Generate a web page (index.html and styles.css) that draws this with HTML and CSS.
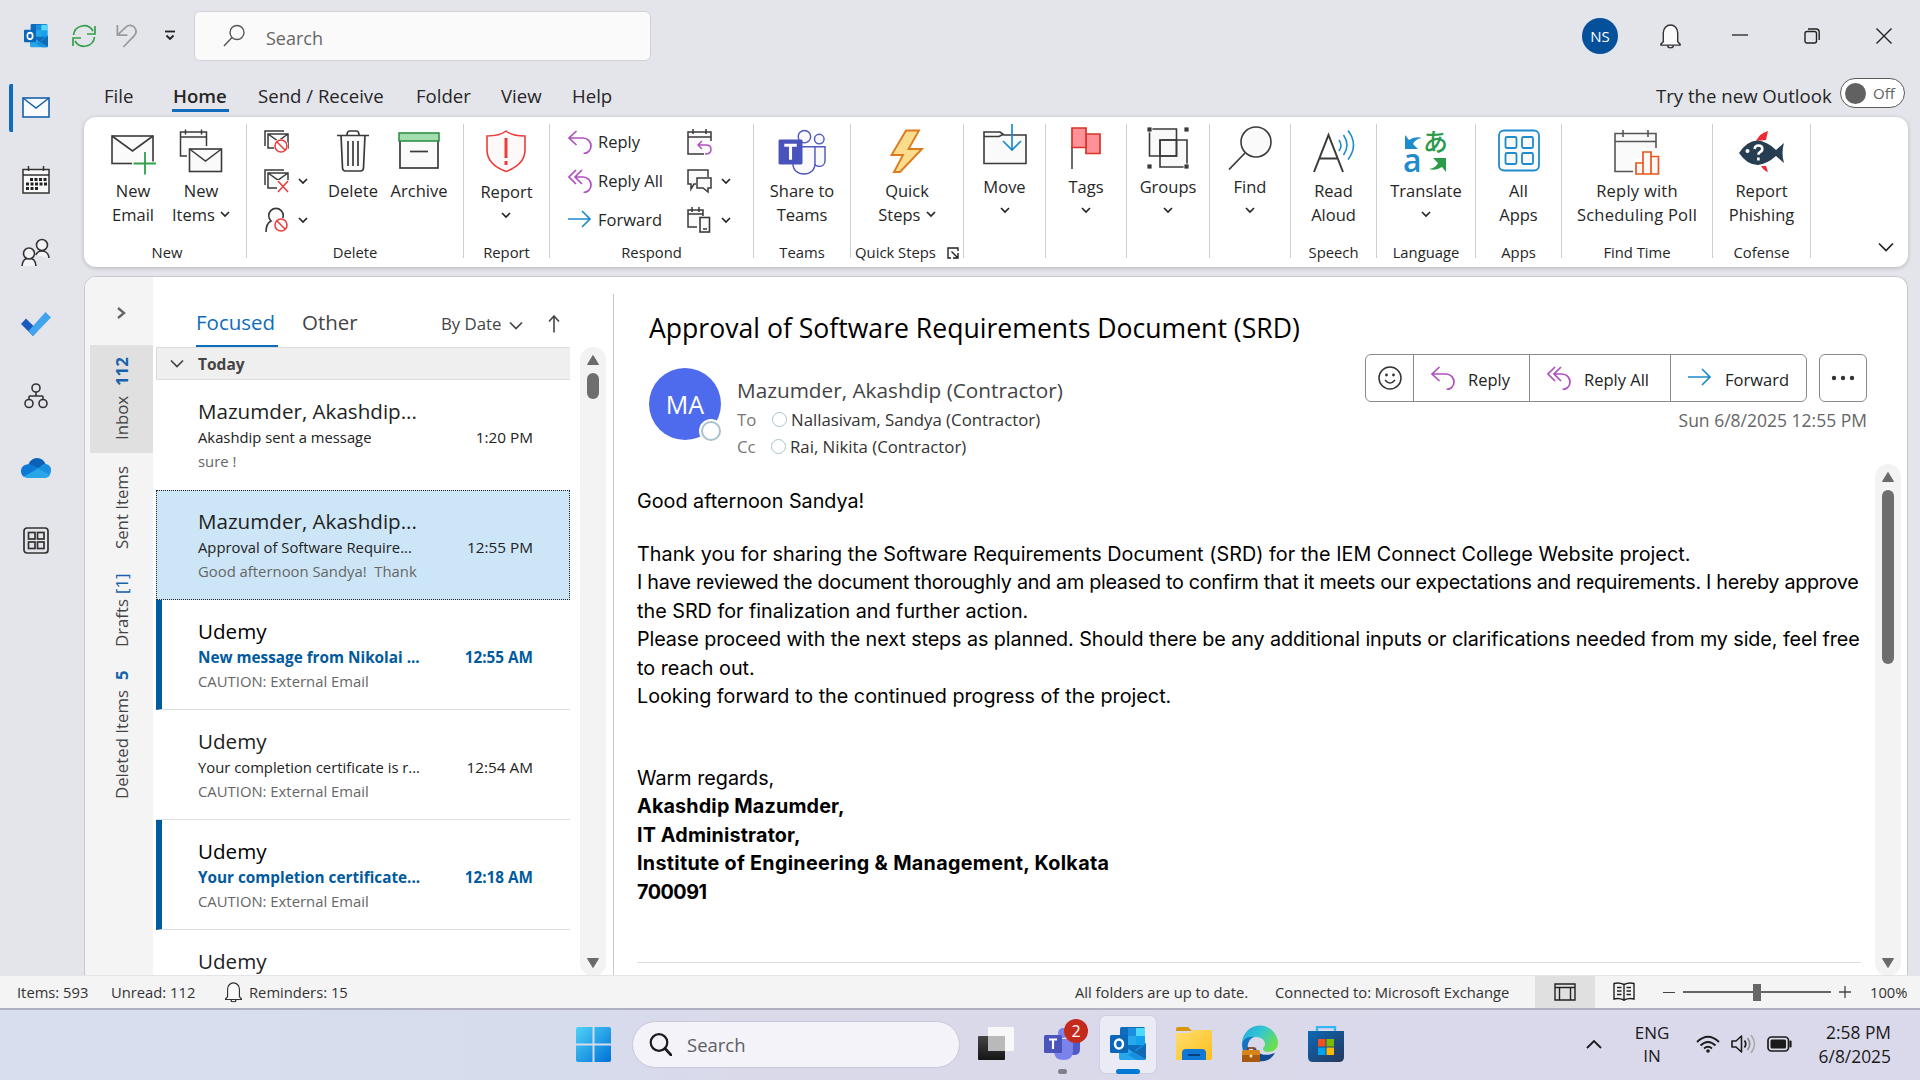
FILE: index.html
```html
<!DOCTYPE html>
<html lang="en">
<head>
<meta charset="utf-8">
<title>Inbox - Outlook</title>
<link rel="stylesheet" href="styles.css">
</head>
<body>
<svg class="defs" width="0" height="0">
  <defs>
    <symbol id="i-chev" viewBox="0 0 10 10"><path d="M1 3l4 4 4-4" fill="none" stroke="#262626" stroke-width="1.7"/></symbol>
    <symbol id="i-reply" viewBox="0 0 24 24"><path d="M8.500 1L1 8l7.500 7M1 8h14c4.500 0 8 3.500 8 8s-3.500 7.500-7.500 7.500" fill="none" stroke="#b14fc0" stroke-width="1.700"/></symbol>
    <symbol id="i-replyall" viewBox="0 0 24 24"><path d="M8 1L1 8l7 7M14 1L7 8l7 7M7 8h8c4.500 0 8 3.500 8 8s-3.500 7.500-7.500 7.500" fill="none" stroke="#b14fc0" stroke-width="1.700"/></symbol>
    <symbol id="i-forward" viewBox="0 0 24 24"><path d="M0 11h22M14 3l8 8-8 8" fill="none" stroke="#1e8bcd" stroke-width="1.700"/></symbol>
    <symbol id="i-no" viewBox="0 0 14 14"><circle cx="7" cy="7" r="6" fill="#fff" stroke="#fff" stroke-width="3"/><circle cx="7" cy="7" r="6" fill="#fff" stroke="#ec3d3d" stroke-width="1.600"/><path d="M3 3l8 8" stroke="#ec3d3d" stroke-width="1.600"/></symbol>
    <symbol id="i-up" viewBox="0 0 14 12"><path d="M7 1.500L12.500 10.500H1.500z" fill="#6a6a6a" stroke="#6a6a6a" stroke-linejoin="round"/></symbol>
    <symbol id="i-down" viewBox="0 0 14 12"><path d="M7 10.500L12.500 1.500H1.500z" fill="#6a6a6a" stroke="#6a6a6a" stroke-linejoin="round"/></symbol>
    <symbol id="i-bell" viewBox="0 0 24 26"><path d="M4.500 19V9.500a7.500 8 0 0 1 15 0V19l2.500 2.500v1H2v-1z" fill="#fafafa" stroke="#333" stroke-width="1.500"/><path d="M9 23a3 2.500 0 0 0 6 0" fill="none" stroke="#333" stroke-width="1.500"/></symbol>
    <symbol id="i-outlook" viewBox="0 0 36 34"><rect x="10" y="0" width="25" height="26" rx="1.500" fill="#0f6cbd"/><rect x="18" y="1" width="9" height="9" fill="#1a8fe0"/><rect x="26" y="1" width="9" height="9" fill="#50d9ff"/><rect x="18" y="9" width="9" height="9" fill="#28a8ea"/><rect x="26" y="9" width="9" height="9" fill="#14a2ee"/><path d="M9 16l14 9 13-9v15a2 2 0 0 1-2 2H11a2 2 0 0 1-2-2z" fill="#28a8ea"/><path d="M36 16L18 28l9 5h7a2 2 0 0 0 2-2z" fill="#1790df"/><path d="M20 23l16 9V17l-10 7z" fill="#1260a8" opacity=".8"/><rect x="0" y="8" width="18" height="18" rx="1.500" fill="#0a66b8"/><ellipse cx="9" cy="17" rx="4" ry="4.600" fill="none" stroke="#fff" stroke-width="2.500"/></symbol>
    <linearGradient id="g-win" x1="0" y1="0" x2="1" y2="1"><stop offset="0" stop-color="#4fd3f8"/><stop offset="1" stop-color="#0071d6"/></linearGradient>
    <linearGradient id="g-edge" x1="0" y1="0" x2="1" y2=".6"><stop offset="0" stop-color="#1ba7e0"/><stop offset=".5" stop-color="#35c6d0"/><stop offset="1" stop-color="#6be04e"/></linearGradient>
    <linearGradient id="g-fold" x1="0" y1="0" x2="1" y2="1"><stop offset="0" stop-color="#ffdf6f"/><stop offset="1" stop-color="#fdbd1c"/></linearGradient>
    <linearGradient id="g-store" x1="0" y1="0" x2="1" y2="1"><stop offset="0" stop-color="#0b69b8"/><stop offset="1" stop-color="#27375a"/></linearGradient>
    <linearGradient id="g-tv" x1="0" y1="0" x2="0" y2="1"><stop offset="0" stop-color="#454545"/><stop offset="1" stop-color="#151515"/></linearGradient>
  </defs>
</svg>
<div class="screen">
  <header class="titlebar">
    <svg class="t-logo" viewBox="0 0 36 34" preserveAspectRatio="none"><use href="#i-outlook"/></svg>
    <svg class="t-sync" viewBox="0 0 24 24"><path d="M1.500 11A10.500 10.500 0 0 1 21 7M23 2v8h-8M22.500 13A10.500 10.500 0 0 1 3 17M1 22v-8h8" fill="none" stroke="#35a04b" stroke-width="1.700"/></svg>
    <svg class="t-undo" viewBox="0 0 24 26"><path d="M1.500 1v11h11M1.500 12L11 3c3-2.500 7-1.800 9 .5 2.500 3 2.200 6.500 0 9L8 25" fill="none" stroke="#9a9a9d" stroke-width="1.900"/></svg>
    <svg class="t-more" viewBox="0 0 12 12"><path d="M1 1.500h10" stroke="#222" stroke-width="1.800"/><path d="M2.500 5.500L6 9l3.500-3.500" fill="none" stroke="#222" stroke-width="1.800"/></svg>
    <div class="search">
      <svg width="23" height="23" viewBox="0 0 23 23"><circle cx="14" cy="8.500" r="7" fill="none" stroke="#555" stroke-width="1.400"/><path d="M9 13.500L1 22" stroke="#555" stroke-width="1.400"/></svg>
      <span>Search</span>
    </div>
    <div class="me">NS</div>
    <svg class="t-bell" viewBox="0 0 24 26"><use href="#i-bell"/></svg>
    <svg class="t-win" viewBox="0 0 16 16"><path d="M0 7h16" stroke="#222" stroke-width="1.300"/></svg>
    <svg class="t-win" viewBox="0 0 16 16"><rect x="1" y="3.500" width="11.500" height="11.500" rx="2" fill="none" stroke="#222" stroke-width="1.400"/><path d="M4 1h8a3.200 3.200 0 0 1 3.200 3.200V12" fill="none" stroke="#222" stroke-width="1.400"/></svg>
    <svg class="t-win" viewBox="0 0 16 16"><path d="M.5.5l15 15M15.500.5l-15 15" stroke="#222" stroke-width="1.400"/></svg>
  </header>

  <div class="middle">
    <nav class="rail">
      <div class="r on"><svg width="28" height="21" viewBox="0 0 28 21"><rect x="1" y="1" width="26" height="19" fill="#f8fafd" stroke="#1763ab" stroke-width="1.600"/><path d="M1 1l13 10L27 1" fill="none" stroke="#1763ab" stroke-width="1.500"/></svg></div>
      <div class="r"><svg width="28" height="28" viewBox="0 0 28 28"><path d="M1 3.500h26V27H1zM1 9h26M6.500 0v5M21.500 0v5" fill="#fafafa" stroke="#333" stroke-width="1.500"/><path d="M8 13.500h17M4 18h21M4 22.500h13" stroke="#222" stroke-width="3" stroke-dasharray="3 1.500"/></svg></div>
      <div class="r"><svg width="30" height="28" viewBox="0 0 30 28"><g fill="#f3f3f6" stroke="#333" stroke-width="1.600"><path d="M15 17c1-3 3-4 6-4s6.500 2 7 7"/><circle cx="21" cy="7" r="5.500"/><path d="M1 28c.5-5 3-8 7-8s6.500 3 7 8"/><circle cx="8" cy="15.500" r="5.500"/></g></svg></div>
      <div class="r"><svg width="30" height="24" viewBox="0 0 30 24"><path d="M0 12l5-5.500 12 12-5 5.500z" fill="#195abd"/><path d="M7.500 19L24.500 0 30 5.500 12 24z" fill="#41a4ee"/></svg></div>
      <div class="r"><svg width="24" height="26" viewBox="0 0 24 26"><g fill="none" stroke="#333" stroke-width="1.600"><circle cx="12" cy="5" r="4"/><circle cx="5" cy="20.500" r="4"/><circle cx="19" cy="20.500" r="4"/><path d="M12 9v4M5 16v-2q0-1 1-1h12q1 0 1 1v2"/></g></svg></div>
      <div class="r"><svg width="30" height="20" viewBox="0 0 30 20"><path d="M7 8C8 3 12 0 16 0c4 0 7 2 8.500 6L16 12z" fill="#0a61b5"/><path d="M6 6.500c3-.8 6 .5 8 2l6 4L3 19c-2-1.500-3-3.500-3-6 0-3.500 2.500-6 6-6.500z" fill="#0f78d4"/><path d="M19 9c1.500-2 3-3 5-3 3.500 0 6 2.500 6 6 0 2-.5 4-2 5.500L14 11z" fill="#1a8fe0"/><path d="M3 18.500L17 10.500l12 6.500c-1 2-3 3-5 3H7c-1.500 0-3-.5-4-1.500z" fill="#29a5ea"/></svg></div>
      <div class="r"><svg width="26" height="27" viewBox="0 0 26 27"><g fill="none" stroke="#333" stroke-width="1.700"><rect x="1" y="1" width="24" height="25" rx="3"/><rect x="5.500" y="5.500" width="6.500" height="6.500"/><rect x="14.500" y="5.500" width="6.500" height="6.500"/><rect x="5.500" y="15" width="6.500" height="6.500"/><rect x="14.500" y="15" width="6.500" height="6.500"/></g></svg></div>
    </nav>

    <div class="work">
      <nav class="tabs">
        <span class="tab w1">File</span><span class="tab w2 active">Home</span><span class="tab w3">Send / Receive</span><span class="tab w4">Folder</span><span class="tab w5">View</span><span class="tab w6">Help</span>
        <span class="trynew">Try the new Outlook</span>
        <span class="toggle"><i></i><b>Off</b></span>
      </nav>

      <section class="ribbon">
        <div class="grp g-new">
          <div class="btns">
            <div class="big w-ne"><svg width="46" height="46" viewBox="0 0 46 46"><rect x="2" y="7" width="41" height="27.500" fill="#fafafa" stroke="#3a3a3a" stroke-width="1.600"/><path d="M2 7l20.500 15L43 7" fill="none" stroke="#3a3a3a" stroke-width="1.600"/><path d="M22 34.500h24M35 22v28" stroke="#fff" stroke-width="4"/><path d="M23.500 34.500H46M35 23v22.500" stroke="#2ea149" stroke-width="1.800"/></svg><span>New<br>Email</span></div>
            <div class="big w-ni"><svg width="44" height="46" viewBox="0 0 44 46"><path d="M1.500 3h26v24h-26zM1.500 8h26M6.500 .5v5M22.500 .5v5" fill="#fafafa" stroke="#3a3a3a" stroke-width="1.500"/><rect x="8" y="17" width="36" height="28" fill="#fff"/><rect x="10.500" y="20" width="32" height="22.500" fill="#fafafa" stroke="#3a3a3a" stroke-width="1.600"/><path d="M10.500 20l16 12 16-12" fill="none" stroke="#3a3a3a" stroke-width="1.500"/></svg><span>New<br>Items <svg class="cv"><use href="#i-chev"/></svg></span></div>
          </div>
          <div class="cap">New</div>
        </div>
        <div class="grp g-del">
          <div class="btns">
            <div class="smalls">
              <div class="sm"><svg width="26" height="24" viewBox="0 0 26 24"><path d="M1 16V1h19" fill="none" stroke="#3a3a3a" stroke-width="1.500"/><path d="M4 4h20v14H4zM4 4l10 7 10-7" fill="#fafafa" stroke="#3a3a3a" stroke-width="1.500"/><use href="#i-no" x="10" y="9" width="14" height="14"/></svg></div>
              <div class="sm"><svg width="26" height="24" viewBox="0 0 26 24"><path d="M1 16V1h19" fill="none" stroke="#3a3a3a" stroke-width="1.500"/><path d="M4 4h20v15H4zM4 4l10 7 10-7" fill="#fafafa" stroke="#3a3a3a" stroke-width="1.500"/><path d="M13 11h13v13H13z" fill="#fff"/><path d="M14 12l10 11M24 12L14 23" stroke="#ec3d3d" stroke-width="1.600"/></svg><svg class="cv"><use href="#i-chev"/></svg></div>
              <div class="sm"><svg width="26" height="26" viewBox="0 0 26 26"><path d="M2 25c0-6 1-9 5-11a7.300 7.300 0 1 1 10 0" fill="#fafafa" stroke="#3a3a3a" stroke-width="1.600"/><use href="#i-no" x="10" y="11" width="14" height="14"/></svg><svg class="cv"><use href="#i-chev"/></svg></div>
            </div>
            <div class="big w-de"><svg width="32" height="46" viewBox="0 -1 32 46"><path d="M4 5l1.500 33q.2 3 3 3h15q2.800 0 3-3L28 5" fill="#fafafa" stroke="#3a3a3a" stroke-width="1.700"/><path d="M0 5.500h32M10 5q0-4 3-4h6q3 0 3 4M11 11v25M16 11v25M21 11v25" fill="none" stroke="#3a3a3a" stroke-width="1.700"/></svg><span>Delete</span></div>
            <div class="big w-ar"><svg width="42" height="46" viewBox="0 -1 42 46"><rect x="2" y="8" width="38" height="30" fill="#fafafa" stroke="#3a3a3a" stroke-width="1.700"/><rect x="1" y="3" width="40" height="8" fill="#a3dfae" stroke="#2f9246" stroke-width="1.600"/><path d="M12 21.500h18" stroke="#3a3a3a" stroke-width="1.700"/></svg><span>Archive</span></div>
          </div>
          <div class="cap">Delete</div>
        </div>
        <div class="grp g-rep">
          <div class="btns"><div class="big w-rp low"><svg width="42" height="46" viewBox="0 -1 42 46"><path d="M21 1c5 4 12 5 19 5v14c0 10-7 17-19 21.500C9 37 2 30 2 20V6c7 0 14-1 19-5z" fill="#fdf9f9" stroke="#ec3d3d" stroke-width="1.600"/><path d="M21 8v20M21 31v4" stroke="#ec3d3d" stroke-width="3"/></svg><span>Report</span><svg class="cv"><use href="#i-chev"/></svg></div></div>
          <div class="cap">Report</div>
        </div>
        <div class="grp g-res">
          <div class="btns">
            <div class="smalls rs">
              <div class="sm"><svg width="24" height="24"><use href="#i-reply"/></svg><span>Reply</span></div>
              <div class="sm"><svg width="24" height="24"><use href="#i-replyall"/></svg><span>Reply All</span></div>
              <div class="sm"><svg width="24" height="24"><use href="#i-forward"/></svg><span>Forward</span></div>
            </div>
            <div class="smalls r2">
              <div class="sm"><svg width="26" height="26" viewBox="0 0 26 26"><path d="M1 3h23v22H1zM1 8h23M6 0v5M19 0v5" fill="#fafafa" stroke="#3a3a3a" stroke-width="1.500"/><path d="M10 12h16v14H17v-5h-7z" fill="#fff"/><path d="M15 12l-4 4 4 4M11 16h8q5 0 5 4.500T18 25" fill="none" stroke="#b14fc0" stroke-width="1.500"/></svg></div>
              <div class="sm"><svg width="26" height="26" viewBox="0 0 26 26"><path d="M9 16H7l-3 5v-5H1V2h20v7" fill="#fafafa" stroke="#3a3a3a" stroke-width="1.500"/><path d="M10 10h14v10h-3v4l-5-4h-6z" fill="#fafafa" stroke="#3a3a3a" stroke-width="1.500"/></svg><svg class="cv"><use href="#i-chev"/></svg></div>
              <div class="sm"><svg width="26" height="26" viewBox="0 0 26 26"><path d="M10 20H1V3h15v6M1 7h15M5 0v5M12 0v5" fill="#fafafa" stroke="#3a3a3a" stroke-width="1.500"/><rect x="13" y="10.500" width="9.500" height="14.500" fill="#fafafa" stroke="#3a3a3a" stroke-width="1.600"/><path d="M16 22h4" stroke="#3a3a3a" stroke-width="1.500"/></svg><svg class="cv"><use href="#i-chev"/></svg></div>
            </div>
          </div>
          <div class="cap">Respond</div>
        </div>
        <div class="grp g-tea">
          <div class="btns"><div class="big"><svg width="49" height="46" viewBox="0 0 50 48"><g fill="#fafafa" stroke="#4f58bf" stroke-width="1.500"><circle cx="27" cy="8" r="6.500"/><circle cx="42.500" cy="10.500" r="5"/><path d="M37 18.500h11.500V33c0 4-3 6-6 6s-5-2-5.500-3"/><path d="M15 18.500h23V36c0 7-5 11-11.500 11S15 43 15 36z"/></g><rect x="0" y="11" width="25" height="26" rx="1.500" fill="#4a53bc"/><path d="M6 17h13M12.500 17v15" stroke="#fff" stroke-width="3.200"/></svg><span>Share to<br>Teams</span></div></div>
          <div class="cap">Teams</div>
        </div>
        <div class="grp g-qui">
          <div class="btns"><div class="big"><svg width="34" height="46" viewBox="0 0 34 46"><path d="M16 1.500h13L18.500 20H32L10 43H4l9-17H1.500z" fill="#f9dc8c" stroke="#df7a1c" stroke-width="1.900"/></svg><span>Quick<br>Steps <svg class="cv"><use href="#i-chev"/></svg></span></div></div>
          <div class="cap">Quick Steps<svg class="launch" viewBox="0 0 12 12"><path d="M11 4V1H1v10h3M4.500 4.500l6 6M11 6v5H6" fill="none" stroke="#222" stroke-width="1.400"/></svg></div>
        </div>
        <div class="grp g-mov"><div class="btns"><div class="big hi"><svg width="44" height="46" viewBox="0 0 44 46"><path d="M1 8h16l4 3h22v28.500H1z" fill="#fafafa" stroke="#3a3a3a" stroke-width="1.600"/><path d="M1 12.500h15l4-2" fill="none" stroke="#3a3a3a" stroke-width="1.600"/><path d="M29 0v26M20 17l9 9 9-9" fill="none" stroke="#1e8bcd" stroke-width="1.700"/></svg><span>Move</span><svg class="cv"><use href="#i-chev"/></svg></div></div></div>
        <div class="grp g-tag"><div class="btns"><div class="big hi"><svg width="32" height="46" viewBox="0 0 32 46"><path d="M2 22v23" stroke="#3a3a3a" stroke-width="1.500"/><path d="M16 10h14v19.500H16z" fill="#ff9199" stroke="#d8342a" stroke-width="1.700"/><path d="M2 4h14v19.500H2z" fill="#ff9199" stroke="#d8342a" stroke-width="1.700"/></svg><span>Tags</span><svg class="cv"><use href="#i-chev"/></svg></div></div></div>
        <div class="grp g-gro"><div class="btns"><div class="big hi"><svg width="42" height="46" viewBox="0 0 42 46"><path d="M2.500 5h27v27h-27zM13 16h27v27H13z" fill="#f9f9f9" stroke="#3a3a3a" stroke-width="1.600"/><path d="M13 32V16h16.500v16z" fill="none" stroke="#3a3a3a" stroke-width="1.600"/><path d="M0 3h5v5H0zM37 3h5v5h-5zM0 40h5v5H0zM37 40h5v5h-5z" fill="#3a3a3a" stroke="#fff" stroke-width=".8"/></svg><span>Groups</span><svg class="cv"><use href="#i-chev"/></svg></div></div></div>
        <div class="grp g-fin"><div class="btns"><div class="big hi"><svg width="44" height="46" viewBox="0 0 44 46"><circle cx="28" cy="18" r="15" fill="#fafafa" stroke="#3a3a3a" stroke-width="1.600"/><path d="M17 29L1 45.500" stroke="#3a3a3a" stroke-width="1.700"/></svg><span>Find</span><svg class="cv"><use href="#i-chev"/></svg></div></div></div>
        <div class="grp g-spe"><div class="btns"><div class="big"><svg width="42" height="46" viewBox="0 0 42 46"><path d="M1 43L15.500 6 30 43M7 29.500h17" fill="none" stroke="#3a3a3a" stroke-width="2"/><path d="M26 11q4 5.500 0 11M30.500 6q7 10 0 20M35 1.500q11 14.500 0 29" fill="none" stroke="#1e8bcd" stroke-width="1.600"/></svg><span>Read<br>Aloud</span></div></div><div class="cap">Speech</div></div>
        <div class="grp g-lan"><div class="btns"><div class="big"><svg width="44" height="46" viewBox="0 0 44 46"><path d="M1 6l4 5q6-4 13-2-7 1-9 6l5 5H1z" fill="#1e8bcd"/><path d="M42 43l-4-5q-6 4-13 2 7-1 9-6l-5-5h13z" fill="#2b9a4a"/><text class="tr-a" x="-1" y="43">a</text><text class="tr-j" x="19" y="22">あ</text></svg><span>Translate</span><svg class="cv"><use href="#i-chev"/></svg></div></div><div class="cap">Language</div></div>
        <div class="grp g-app"><div class="btns"><div class="big"><svg width="42" height="46" viewBox="0 2 42 46"><g fill="#fafafa" stroke="#1e8bcd" stroke-width="1.800"><rect x="1" y="3.500" width="40" height="40" rx="5"/><rect x="7.500" y="10" width="11" height="11" rx="1.500"/><rect x="24" y="10" width="11" height="11" rx="1.500"/><rect x="7.500" y="26" width="11" height="11" rx="1.500"/><rect x="24" y="26" width="11" height="11" rx="1.500"/></g></svg><span>All<br>Apps</span></div></div><div class="cap">Apps</div></div>
        <div class="grp g-ftm"><div class="btns"><div class="big"><svg width="46" height="46" viewBox="0 0 46 46"><path d="M1 4.500h41v38H1zM1 12.500h41M9 1v7M34 1v7" fill="#fafafa" stroke="#555" stroke-width="1.600"/><path d="M19 29h8V19h18v27H19z" fill="#fff"/><g fill="#fafafa" stroke="#e8561c" stroke-width="1.700"><path d="M22 34h7v11h-7zM29 23h8v22h-8zM37 27.500h7.500V45H37z"/></g></svg><span class="fp">Reply with<br>Scheduling Poll</span></div></div><div class="cap">Find Time</div></div>
        <div class="grp g-cof"><div class="btns"><div class="big"><svg width="46" height="46" viewBox="0 -1 46 46"><path d="M17 11Q21 3 29 1l-2 9z" fill="#ee2a33"/><path d="M22 36h5l2 6q-4-1-7-6z" fill="#ee2a33"/><path d="M0 23Q8 11 18 10.500 28 11 37 20l8-7q-3 10 0 20l-8-7q-9 8-18 9Q8 35 0 23z" fill="#263d52"/><circle cx="8.500" cy="21" r="2" fill="#fff"/><path d="M15.500 19q.5-3.500 4-3.500 3.800 0 3.800 3.200 0 2.300-2.300 3.500-1.600 1-1.600 2.600M19.400 27.500v3" fill="none" stroke="#fff" stroke-width="2.600"/></svg><span>Report<br>Phishing</span></div></div><div class="cap">Cofense</div></div>
        <svg class="collapse" viewBox="0 0 16 10"><path d="M1 1.500l7 7 7-7" fill="none" stroke="#222" stroke-width="1.700"/></svg>
      </section>

      <section class="card">
        <div class="strip">
          <svg class="expand" viewBox="0 0 10 12"><path d="M2 1l6 5-6 5" fill="none" stroke="#666" stroke-width="2.400"/></svg>
          <div class="vf v1 sel"><span>Inbox</span><b>112</b></div>
          <div class="vf v2"><span>Sent Items</span></div>
          <div class="vf v3"><span>Drafts</span><em>[1]</em></div>
          <div class="vf v4"><span>Deleted Items</span><b>5</b></div>
        </div>
        <div class="list">
          <div class="lhead">
            <span class="foc">Focused</span><span class="oth">Other</span>
            <span class="by">By Date</span>
            <svg class="bychev" viewBox="0 0 14 9"><path d="M1 1.500l6 6 6-6" fill="none" stroke="#444" stroke-width="1.700"/></svg>
            <svg class="byup" viewBox="0 0 12 18"><path d="M6 17.500V1M1 6.500L6 1l5 5.500" fill="none" stroke="#444" stroke-width="1.600"/></svg>
          </div>
          <div class="lbody">
            <div class="items">
              <div class="today"><svg viewBox="0 0 14 9"><path d="M1 1.500l6 6 6-6" fill="none" stroke="#444" stroke-width="1.700"/></svg><span>Today</span></div>
              <div class="it first"><p class="nm">Mazumder, Akashdip...</p><p class="sj"><span>Akashdip sent a message</span><time>1:20 PM</time></p><p class="pv">sure !</p></div>
              <div class="it chosen"><p class="nm">Mazumder, Akashdip...</p><p class="sj"><span>Approval of Software Require...</span><time>12:55 PM</time></p><p class="pv">Good afternoon Sandya!&nbsp; Thank</p></div>
              <div class="it unread"><p class="nm">Udemy</p><p class="sj"><span>New message from Nikolai ...</span><time>12:55 AM</time></p><p class="pv">CAUTION: External Email</p></div>
              <div class="it"><p class="nm">Udemy</p><p class="sj"><span>Your completion certificate is r...</span><time>12:54 AM</time></p><p class="pv">CAUTION: External Email</p></div>
              <div class="it unread"><p class="nm">Udemy</p><p class="sj"><span>Your completion certificate...</span><time>12:18 AM</time></p><p class="pv">CAUTION: External Email</p></div>
              <div class="it last"><p class="nm">Udemy</p></div>
            </div>
            <div class="bar"><svg viewBox="0 0 14 12"><use href="#i-up"/></svg><i class="th1"></i><svg class="dn" viewBox="0 0 14 12"><use href="#i-down"/></svg></div>
          </div>
        </div>
        <div class="reading">
          <div class="rhead">
            <h1>Approval of Software Requirements Document (SRD)</h1>
            <div class="rrow">
              <div class="ava">MA<i></i></div>
              <div class="who">
                <p class="from">Mazumder, Akashdip (Contractor)</p>
                <p class="to"><span>To</span><i></i>Nallasivam, Sandya (Contractor)</p>
                <p class="to cc"><span>Cc</span><i></i>Rai, Nikita (Contractor)</p>
              </div>
              <div class="acts">
                <div class="arow">
                  <div class="seg">
                    <div class="a1"><svg width="24" height="24" viewBox="0 0 24 24"><circle cx="12" cy="12" r="11" fill="none" stroke="#333" stroke-width="1.500"/><circle cx="8.500" cy="9" r="1.400" fill="#333"/><circle cx="15.500" cy="9" r="1.400" fill="#333"/><path d="M7 14q5 6 10 0" fill="none" stroke="#333" stroke-width="1.500"/></svg></div>
                    <div class="a2"><svg width="24" height="24"><use href="#i-reply"/></svg><span>Reply</span></div>
                    <div class="a3"><svg width="24" height="24"><use href="#i-replyall"/></svg><span>Reply All</span></div>
                    <div class="a4"><svg width="24" height="24"><use href="#i-forward"/></svg><span>Forward</span></div>
                  </div>
                  <div class="dots"><svg width="24" height="6" viewBox="0 0 24 6"><circle cx="3" cy="3" r="2.200" fill="#333"/><circle cx="12" cy="3" r="2.200" fill="#333"/><circle cx="21" cy="3" r="2.200" fill="#333"/></svg></div>
                </div>
                <p class="date">Sun 6/8/2025 12:55 PM</p>
              </div>
            </div>
          </div>
          <div class="rbody">
            <article>
              <p class="l1">Good afternoon Sandya!</p>
              <p class="l2">Thank you for sharing the Software Requirements Document (SRD) for the IEM Connect College Website project.</p>
              <p class="l3">I have reviewed the document thoroughly and am pleased to confirm that it meets our expectations and requirements. I hereby approve</p>
              <p>the SRD for finalization and further action.</p>
              <p class="l5">Please proceed with the next steps as planned. Should there be any additional inputs or clarifications needed from my side, feel free</p>
              <p>to reach out.</p>
              <p>Looking forward to the continued progress of the project.</p>
              <p class="l8">Warm regards,</p>
              <p class="bd">Akashdip Mazumder,</p>
              <p class="bd">IT Administrator,</p>
              <p class="bd l11">Institute of Engineering &amp; Management, Kolkata</p>
              <p class="bd l12">700091</p>
              <hr>
            </article>
            <div class="bar"><svg viewBox="0 0 14 12"><use href="#i-up"/></svg><i class="th2"></i><svg class="dn" viewBox="0 0 14 12"><use href="#i-down"/></svg></div>
          </div>
        </div>
      </section>
    </div>
  </div>

  <footer class="status">
    <span class="s1">Items: 593</span><span class="s2">Unread: 112</span>
    <svg class="s-bell" viewBox="0 0 24 26"><use href="#i-bell"/></svg><span class="s3">Reminders: 15</span>
    <span class="s4">All folders are up to date.</span><span class="s5">Connected to: Microsoft Exchange</span>
    <div class="vbtn"><svg width="22" height="18" viewBox="0 0 22 18"><path d="M1 1h20v16H1zM1 4.500h20M5.500 4.500V17M16.500 4.500V17" fill="none" stroke="#222" stroke-width="1.400"/></svg></div>
    <svg class="book" viewBox="0 0 22 20"><path d="M11 2.500Q6 0 1 1.500v15.500q5-1.500 10 1 5-2.500 10-1V1.500Q16 0 11 2.500zM11 2.500V19M4 5.500h4.500M4 9h4.500M4 12.500h4.500M13.500 5.500H18M13.500 9H18M13.500 12.500H18" fill="none" stroke="#222" stroke-width="1.400"/></svg>
    <i class="minus"></i>
    <div class="zoom"><i></i></div>
    <svg class="plus" viewBox="0 0 12 12"><path d="M0 6h12M6 0v12" stroke="#444" stroke-width="1.300"/></svg>
    <span class="s6">100%</span>
  </footer>

  <footer class="taskbar">
    <svg class="start" viewBox="0 0 36 36"><path d="M2 0h15v17H0V2q0-2 2-2zM19 0h15q2 0 2 2v15H19zM0 19h17v17H2q-2 0-2-2zM19 19h17v15q0 2-2 2H19z" fill="url(#g-win)"/></svg>
    <div class="tsearch"><svg width="23" height="23" viewBox="0 0 23 23"><circle cx="10" cy="9.500" r="8.300" fill="none" stroke="#1b1b1b" stroke-width="2.200"/><path d="M16 15.500l6 6.500" stroke="#1b1b1b" stroke-width="2.600" stroke-linecap="round"/></svg><span>Search</span></div>
    <div class="tk k1"><svg width="36" height="34" viewBox="0 0 36 34"><rect x="0" y="9" width="27" height="24" rx="1" fill="url(#g-tv)"/><rect x="10" y="0" width="26" height="24" rx="1" fill="#f8f8f8"/><path d="M10 9h17v15H10z" fill="#b9b9b9"/></svg></div>
    <div class="tk k2"><svg width="36" height="34" viewBox="0 0 36 34"><circle cx="19" cy="6" r="5" fill="#7b83eb"/><circle cx="30" cy="7" r="4" fill="#5059c9"/><path d="M25 12h11v10q0 6-6 6h-5z" fill="#5059c9"/><path d="M10 12h19v12q0 9-9.500 9T10 24z" fill="#7b83eb"/><rect x="0" y="8" width="18" height="18" rx="1.500" fill="#4b53bc"/><path d="M5 12.500h8M9 12.500V22" stroke="#fff" stroke-width="2.200"/></svg><b class="badge">2</b><i class="dot"></i></div>
    <div class="tk k3"><svg width="36" height="34"><use href="#i-outlook"/></svg><i class="run"></i></div>
    <div class="tk k4"><svg width="36" height="34" viewBox="0 0 36 34"><path d="M0 2q0-2 2-2h10l4 4H0z" fill="#d8960c"/><path d="M0 6h13l4-3h17q2 0 2 2v26q0 2-2 2H0z" fill="url(#g-fold)"/><path d="M6 33v-7q0-4 4-4h16q4 0 4 4v7z" fill="#0f78d4"/><path d="M12 28h12" stroke="#0a3f7a" stroke-width="2"/></svg></div>
    <div class="tk k5"><svg width="36" height="38" viewBox="0 0 36 38"><path d="M0 19a18 18 0 0 1 36-1c0 6-5 9-10 9-3 0-5-1-5-3s2-2 2-5c0-4-4-7-9-7C7 12 1 15 0 19z" fill="url(#g-edge)"/><path d="M0 19c1-5 6-8 12-7-5 2-7 7-6 12 2 8 9 11 16 11-9 4-22-2-22-16z" fill="#1374c4"/><path d="M14 22c0 7 8 10 19 6-4 7-10 9-16 8-5-2-7-8-3-14z" fill="#104a91"/><rect x="0" y="25" width="18" height="12" rx="1.500" fill="#d8841c"/><path d="M0 30h18v7H0z" fill="#a85a10"/><path d="M6 25v-2h6v2" fill="none" stroke="#6b3608" stroke-width="1.500"/><circle cx="9" cy="31" r="1.500" fill="#ffe9a0"/></svg></div>
    <div class="tk k6"><svg width="36" height="36" viewBox="0 0 36 36"><path d="M9 6V1h18v5" fill="none" stroke="#35b8f2" stroke-width="2.400"/><path d="M0 5h36v26q0 5-5 5H5q-5 0-5-5z" fill="url(#g-store)"/><path d="M10 13h7.500v7.500H10z" fill="#f25022"/><path d="M18.500 13H26v7.500h-7.500z" fill="#7fba00"/><path d="M10 21.500h7.500V29H10z" fill="#00a4ef"/><path d="M18.500 21.500H26V29h-7.500z" fill="#ffb900"/></svg></div>
    <svg class="tchev" viewBox="0 0 16 10"><path d="M1 9l7-7 7 7" fill="none" stroke="#1b1b1b" stroke-width="1.800"/></svg>
    <div class="lang">ENG<br>IN</div>
    <svg class="wifi" viewBox="0 0 24 18"><g fill="none" stroke="#1b1b1b" stroke-width="1.800"><path d="M1 7Q12-3.500 23 7M4.500 10.500q7.500-7 15 0M8 13.500q4-3.500 8 0"/></g><circle cx="12" cy="16" r="1.800" fill="#1b1b1b"/></svg>
    <svg class="snd" viewBox="0 0 25 20"><path d="M1 7h4l5.500-5v16L5 13H1z" fill="none" stroke="#1b1b1b" stroke-width="1.600" stroke-linejoin="round"/><path d="M13.500 6.500q2.500 3.500 0 7" fill="none" stroke="#1b1b1b" stroke-width="1.700"/><path d="M16.500 4q4.500 6 0 12" fill="none" stroke="#888" stroke-width="1.600"/><path d="M20 1q7 9 0 18" fill="none" stroke="#aaa" stroke-width="1.600"/></svg>
    <svg class="bat" viewBox="0 0 25 16"><rect x="1" y="1" width="20.500" height="14" rx="3.500" fill="none" stroke="#1b1b1b" stroke-width="1.700"/><rect x="3.500" y="3.500" width="15.500" height="9" rx="1.500" fill="#1b1b1b"/><path d="M23.500 5.500v5" stroke="#1b1b1b" stroke-width="2.200" stroke-linecap="round"/></svg>
    <div class="clock"><span>2:58 PM</span><span>6/8/2025</span></div>
  </footer>
</div>
</body>
</html>
```

FILE: styles.css
```css
* { box-sizing: border-box; margin: 0; padding: 0; }
body { width: 1920px; height: 1080px; overflow: hidden; font-family: "Open Sans", "Noto Sans", sans-serif; color: #262626; }
p, span, h1, time { white-space: nowrap; }
svg { display: block; flex: none; }
i, em { font-style: normal; flex: none; }
.defs { position: absolute; }
.screen { display: flex; flex-direction: column; width: 1920px; height: 1080px; background: #e4e4eb; }

/* title bar */
.titlebar { display: flex; align-items: center; height: 72px; padding-left: 24px; }
.t-logo { width: 24px; height: 24px; margin-right: 24px; }
.t-sync { width: 24px; height: 24px; margin-right: 20px; }
.t-undo { width: 22px; height: 26px; margin-right: 26px; }
.t-more { width: 12px; height: 12px; margin-right: 18px; }
.search { display: flex; flex: none; align-items: center; width: 457px; height: 50px; padding: 3px 0 0 28px; gap: 20px; background: #fafafa; border: 1px solid #d2d2d6; border-radius: 6px; margin-right: 931px; color: #666; font-size: 18px; }
.search svg { margin-bottom: 5px; }
.me { flex: none; width: 36px; height: 36px; margin-right: 41px; border-radius: 50%; background: #04509a; color: #fff; font-size: 15px; line-height: 36px; text-align: center; }
.t-bell { width: 23px; height: 26px; margin-right: 50px; }
.t-win { width: 16px; height: 16px; margin-right: 56px; }
.t-win:last-child { margin-right: 0; }

.middle { display: flex; height: 904px; }

/* left rail */
.rail { width: 84px; padding-top: 12px; display: flex; flex-direction: column; gap: 24px; }
.r { height: 48px; width: 62px; padding-left: 9px; display: flex; align-items: center; justify-content: center; }
.r.on { border-left: 4px solid #0f6cbd; width: 50px; margin-left: 9px; padding-left: 0; padding-bottom: 2px; border-radius: 2px; }

.work { width: 1836px; }

/* ribbon tabs */
.tabs { display: flex; height: 45px; padding: 6px 0 0 20px; font-size: 18.600px; line-height: 36px; }
.tab { flex: none; height: 35px; }
.w1 { width: 68px; } .w2 { width: 86px; padding-left: 1px; } .w3 { width: 158px; } .w4 { width: 85px; } .w5 { width: 71px; } .w6 { width: 1084px; }
.active { font-weight: 600; background: linear-gradient(#0f6cbd, #0f6cbd) 0 31px / 57px 3px no-repeat; }
.trynew { width: 184px; }
.toggle { display: flex; align-items: center; flex: none; width: 65px; height: 30px; border: 1px solid #5c5c5c; border-radius: 15px; background: #fff; padding-left: 4px; }
.toggle i { width: 21px; height: 21px; border-radius: 50%; background: #616161; margin-right: 7px; }
.toggle b { font-weight: 400; font-size: 15px; color: #616161; line-height: 20px; }

/* ribbon */
.ribbon { display: flex; width: 1824px; height: 150px; padding: 7px 0 0 1px; background: #fff; border-radius: 12px; box-shadow: 0 1px 4px rgba(0,0,0,.22); }
.grp { flex: none; height: 134px; border-right: 1px solid #cfcfcf; display: flex; flex-direction: column; justify-content: space-between; }
.btns { display: flex; justify-content: center; }
.cap { font-size: 14.800px; line-height: 17px; text-align: center; display: flex; justify-content: center; white-space: nowrap; height: 14px; }
.big { display: flex; flex-direction: column; align-items: center; font-size: 16.500px; line-height: 24px; text-align: center; padding-top: 5px; }
.big > svg:first-child { margin-bottom: 4px; }
.big.hi > svg:first-child { margin-top: -5px; }
.low > span, .hi > span { margin-top: 1px; }
.fp { letter-spacing: .25px; }
.cv { width: 10px; height: 10px; margin: 6px auto 0; }
span .cv { display: inline-block; margin: 0 0 2px 1px; }
.g-new { width: 162px; padding-left: 3px; } .g-del { width: 217px; } .g-rep { width: 86px; } .g-res { width: 204px; }
.g-tea { width: 97px; } .g-qui { width: 113px; } .g-mov { width: 82px; } .g-tag { width: 81px; }
.g-gro { width: 83px; } .g-fin { width: 81px; } .g-spe { width: 86px; } .g-lan { width: 99px; }
.g-app { width: 86px; } .g-ftm { width: 151px; } .g-cof { width: 98px; }
.g-del .btns { padding-left: 8px; }
.w-ne { width: 68px; } .w-ni { width: 68px; }
.smalls { display: flex; flex-direction: column; font-size: 16.500px; line-height: 24px; margin-top: -2px; }
.sm { display: flex; align-items: center; height: 39px; gap: 6px; }
.sm .cv { margin: 0 0 0 2px; }
.g-del .smalls { width: 54px; margin-right: 4px; }
.w-de { width: 62px; } .w-ar { width: 70px; }
.rs { width: 119px; } .r2 { width: 48px; }
.launch { width: 12px; height: 12px; margin: 3px 0 0 11px; }
.g-qui .cap { padding-left: 0; }
.tr-a { font: 600 32px "Open Sans", sans-serif; fill: #1e8bcd; }
.tr-j { font: 500 25px "Noto Sans CJK JP", sans-serif; fill: #2b9a4a; }
.collapse { width: 16px; height: 10px; margin: 118px 0 0 67px; }

/* mail card */
.card { display: flex; width: 1824px; height: 699px; margin-top: 9px; background: #fff; border: 1px solid #c9c9cd; border-bottom: 0; border-radius: 12px 12px 0 0; overflow: hidden; }
.strip { width: 68px; padding-left: 5px; background: #f4f4f4; display: flex; flex-direction: column; align-items: stretch; }
.expand { width: 10px; height: 12px; margin: 30px 0 26px 26px; }
.vf { writing-mode: vertical-rl; transform: rotate(180deg); display: flex; align-items: center; justify-content: center; font-size: 16.800px; line-height: 24px; color: #444; gap: 10px; width: 63px; }
.vf span { flex: none; }
.vf b, .vf em { color: #1763ab; font-weight: 700; }
.vf em { font-weight: 400; }
.sel { background: #e0e0e0; }
.v1 { height: 108px; } .v2 { height: 110px; } .v3 { height: 94px; gap: 5px; } .v4 { height: 128px; margin-top: 14px; }

.list { width: 460px; padding-left: 3px; }
.lhead { display: flex; height: 70px; padding: 24px 0 0 40px; font-size: 20.500px; line-height: 42px; }
.foc { width: 106px; color: #0f6cbd; background: linear-gradient(#0f6cbd, #0f6cbd) 0 44px / 82px 2px no-repeat; height: 46px; }
.oth { width: 139px; color: #444; }
.by { width: 68px; font-size: 16.800px; line-height: 46px; color: #444; }
.bychev { width: 14px; height: 9px; margin: 20px 25px 0 0; }
.byup { width: 12px; height: 18px; margin-top: 14px; }
.lbody { display: flex; height: 629px; gap: 10px; }
.items { flex: none; width: 414px; height: 628px; overflow: hidden; }
.today { display: flex; align-items: center; height: 33px; gap: 14px; padding-left: 13px; background: #efefef; border: 1px solid #dcdcdc; border-right: 0; font-size: 15.500px; font-weight: 700; color: #444; }
.today svg { width: 14px; height: 9px; }
.it { height: 110px; padding: 17px 37px 0 42px; border-bottom: 1px solid #dedede; }
.it.first { border-bottom: 0; }
.it p { display: flex; }
.nm { font-size: 20.600px; line-height: 28px; color: #222; }
.sj { font-size: 14.800px; line-height: 24px; color: #222; justify-content: space-between; }
.sj time { font-size: 15.300px; }
.pv { font-size: 14.850px; line-height: 24px; color: #666; }
.chosen { background: #cde6f7; border: 1px dotted #222; padding: 16px 36px 0 41px; }
.unread { border-left: 6px solid #005a9e; padding-left: 36px; }
.unread .sj { color: #005a9e; font-weight: 700; font-size: 15.300px; }
.unread .nm { color: #000; }
.last { border-bottom: 0; }
.bar { display: flex; flex-direction: column; align-items: center; width: 26px; background: #f3f3f3; border-radius: 13px; padding-top: 7px; flex: none; }
.bar svg { width: 14px; height: 12px; }
.bar i { width: 12px; border-radius: 6px; background: #6e6e6e; margin-top: 7px; }
.bar .dn { margin: auto 0 7px; }
.th1 { height: 26px; } .th2 { height: 174px; }

/* reading pane */
.reading { width: 1294px; }
.rhead { height: 187px; margin-top: 17px; border-left: 1px solid #c8c8c8; padding: 16px 0 0 35px; }
h1 { font-size: 26.600px; font-weight: 400; line-height: 36px; color: #000; }
.rrow { display: flex; }
.ava { position: relative; width: 72px; height: 72px; margin-top: 22px; border-radius: 50%; background: #4f6bed; color: #fff; font-size: 25px; line-height: 72px; text-align: center; flex: none; }
.ava i { position: absolute; right: 0; bottom: -1px; width: 20px; height: 20px; border-radius: 50%; border: 2px solid #a9c3ce; background: #fff; box-shadow: 0 0 0 2px #fff; }
.who { flex: none; width: 628px; padding: 28px 0 0 16px; }
.from { font-size: 20.750px; line-height: 32px; color: #444; }
.to { display: flex; align-items: center; font-size: 16.800px; line-height: 27px; color: #333; }
.to span { width: 35px; color: #777; }
.to i { width: 15px; height: 15px; border: 1px solid #a9c3ce; border-radius: 50%; margin-right: 4px; }
.cc span { width: 34px; }
.acts { padding-top: 8px; width: 502px; margin-left: 16px; }
.arow { display: flex; gap: 12px; }
.seg { display: flex; width: 442px; height: 48px; border: 1px solid #8a8a8a; border-radius: 6px; font-size: 16.500px; color: #222; }
.seg div { display: flex; align-items: center; border-right: 1px solid #8a8a8a; }
.seg div:last-child { border-right: 0; }
.seg span { margin-top: 2px; }
.a1 { width: 48px; justify-content: center; }
.a2, .a3, .a4 { padding-left: 17px; gap: 13px; }
.a2 { width: 116px; } .a3 { width: 141px; }
.dots { width: 48px; height: 48px; border: 1px solid #8a8a8a; border-radius: 6px; display: flex; align-items: center; justify-content: center; }
.date { width: 502px; text-align: right; font-size: 17.500px; line-height: 36px; color: #666; }
.rbody { display: flex; justify-content: space-between; height: 512px; border-left: 1px solid #c8c8c8; padding: 0 6px 0 23px; margin-top: -17px; }
article { width: 1224px; padding-top: 23px; font-family: Inter, sans-serif; font-size: 19.750px; line-height: 28.500px; color: #000; }
.rbody .bar { height: 512px; }
.l2 { margin-top: 24px; letter-spacing: .04px; }
.l3 { letter-spacing: -.3px; }
.l5 { letter-spacing: -.08px; }
.l8 { margin-top: 53px; }
.bd { font-weight: 700; letter-spacing: .15px; }
.l11 { letter-spacing: .3px; }
.l12 { letter-spacing: -.5px; }
hr { border: 0; border-top: 1px solid #dcdcdc; margin-top: 56px; }

/* status bar */
.status { display: flex; align-items: center; height: 34px; background: #f4f4f4; border-bottom: 2px solid #b0b1c0; font-size: 14.750px; color: #333; padding-left: 17px; }
.status span { flex: none; }
.s1 { width: 94px; } .s2 { width: 113px; } .s-bell { width: 19px; height: 22px; margin-right: 6px; }
.s3 { width: 826px; } .s4 { width: 200px; } .s5 { width: 260px; }
.vbtn { width: 60px; height: 32px; background: #e0e0e0; display: flex; align-items: center; justify-content: center; margin-right: 18px; flex: none; }
.book { width: 22px; height: 20px; margin-right: 28px; }
.minus { width: 12px; height: 1px; background: #444; margin-right: 8px; }
.zoom { display: flex; align-items: center; justify-content: center; width: 148px; height: 18px; margin-right: 8px; flex: none; background: linear-gradient(#666, #666) 0 8px / 148px 2px no-repeat; }
.zoom i { width: 8px; height: 17px; background: #666; }
.plus { width: 12px; height: 12px; margin-right: 19px; }

/* taskbar */
.taskbar { display: flex; align-items: center; height: 70px; padding: 0 0 2px 576px; background: linear-gradient(90deg, #d7dfee 0, #d6dcec 560px, #dad9ea 760px, #dad9eb 100%); color: #1b1b1b; }
.start { width: 35px; height: 35px; margin-right: 21px; }
.tsearch { display: flex; flex: none; align-items: center; width: 328px; height: 47px; padding-left: 16px; gap: 15px; border-radius: 24px; background: #f4f3fa; border: 1px solid #c8c8d8; font-size: 18.500px; color: #5d5d63; margin-right: -2px; }
.tk { position: relative; display: flex; align-items: center; justify-content: center; width: 56px; height: 57px; margin-left: 10px; border-radius: 6px; flex: none; }
.k3 { background: #ebebf6; box-shadow: 0 0 1px 1px #cfcfe0; }
.badge { position: absolute; left: 30px; top: 3px; width: 24px; height: 24px; border-radius: 50%; background: #c42b1c; color: #fff; font-weight: 400; font-size: 16px; line-height: 24px; text-align: center; }
.dot { position: absolute; bottom: -1px; left: 24px; width: 9px; height: 5px; border-radius: 3px; background: #808089; }
.run { position: absolute; bottom: -1px; left: 16px; width: 24px; height: 5px; border-radius: 3px; background: #0078d4; }
.tchev { width: 16px; height: 10px; margin: 0 31px 0 232px; }
.lang { width: 38px; font-size: 17px; line-height: 23px; text-align: center; margin-right: 25px; }
.wifi { width: 24px; height: 18px; margin-right: 11px; }
.snd { width: 25px; height: 20px; margin-right: 11px; }
.bat { width: 25px; height: 16px; margin-right: 22px; }
.clock { display: flex; flex-direction: column; align-items: flex-end; width: 77px; font-size: 17.400px; line-height: 24px; }
```
